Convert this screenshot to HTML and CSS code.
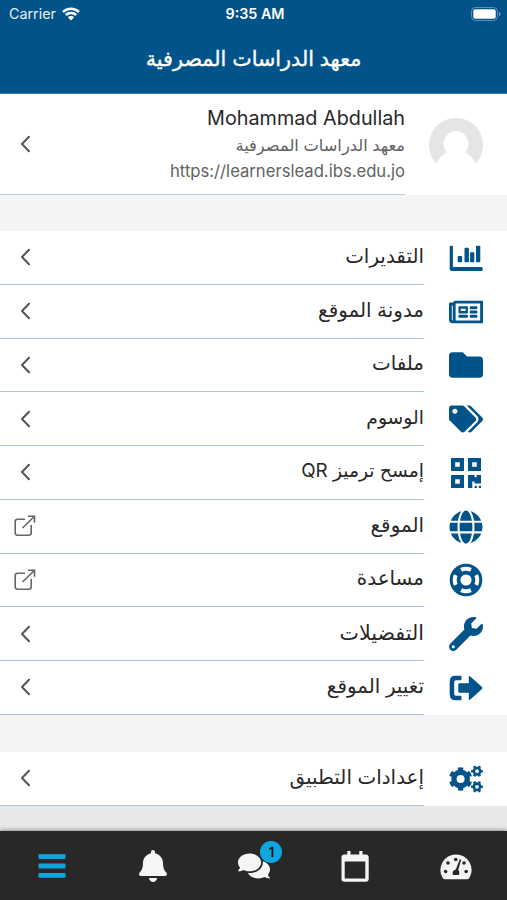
FILE: index.html
```
<!DOCTYPE html>
<html lang="ar" dir="rtl">
<head>
  <meta charset="UTF-8">
  <title>معهد الدراسات المصرفية</title>
  <link rel="stylesheet" href="styles.css">
</head>
<body>

<header class="header">
  <div class="status" dir="ltr">
    <div class="carrier">
      <span>Carrier</span>
      <svg class="wifi" viewBox="0 0 18 14">
        <path d="M1 5a11.5 11.5 0 0 1 16 0M3.8 8a7.5 7.5 0 0 1 10.4 0" fill="none" stroke="#fff" stroke-width="2.5"/>
        <path d="M5.8 10.2a4.6 4.6 0 0 1 6.4 0L9 13.6z" fill="#fff"/>
      </svg>
    </div>
    <span class="time">9:35 AM</span>
    <svg class="battery" viewBox="0 0 30 14">
      <rect x=".5" y=".5" width="26" height="13" rx="4" fill="none" stroke="#5f8fb4"/>
      <rect x="2.3" y="2.3" width="22.4" height="9.4" rx="2" fill="#fff"/>
      <path d="M28 5c2 .8 2 3.2 0 4z" fill="#7fa5c2"/>
    </svg>
  </div>
  <h1>معهد الدراسات المصرفية</h1>
</header>

<main class="content">
  <section class="profile">
    <svg class="avatar" viewBox="0 0 54 54">
      <path d="M27 0a27 27 0 0 1 19.5 45.700c-2-5.200-5.500-9-10.500-11.500a12.500 12.500 0 1 0-18 0c-5 2.500-8.500 6.300-10.500 11.500A27 27 0 0 1 27 0z" fill="#e5e5e5"/>
    </svg>
    <div class="profile-text">
      <h2 dir="ltr">Mohammad Abdullah</h2>
      <p class="site">معهد الدراسات المصرفية</p>
      <p class="url" dir="ltr">https://learnerslead.ibs.edu.jo</p>
      <svg class="chevron" viewBox="0 0 10 18"><path d="M9 1.800L2 9 9 16.200"/></svg>
    </div>
  </section>

  <ul class="menu">
    <li>
      <svg class="icon" viewBox="0 0 34 34">
        <path d="M1.700 4.700h1.200q1 0 1 1v20.400h28.500q1.200 0 1.200 1v1.900q0 1-1 1H2.700q-2 0-2-2V5.700q0-1 1-1zM9.500 15h2.800q.8 0 .8.800v4.700q0 .8-.8.800H9.500q-.8 0-.8-.8v-4.700q0-.8.8-.8zM16.300 6.800h2.800q.8 0 .8.800v12.900q0 .8-.8.800h-2.800q-.8 0-.8-.8V7.600q0-.8.800-.8zM21.900 11.300h2.600q.8 0 .8.800v8.400q0 .8-.8.800h-2.600q-.8 0-.8-.8v-8.400q0-.8.800-.8zM27.800 4.700h2.700q.8 0 .8.800v15q0 .8-.8.800h-2.700q-.8 0-.8-.8v-15q0-.8.800-.8z"/>
      </svg>
      <div class="row"><span>التقديرات</span><svg class="chevron" viewBox="0 0 10 18"><path d="M9 1.800L2 9 9 16.200"/></svg></div>
    </li>
    <li>
      <svg class="icon" viewBox="0 0 576 512">
        <path d="M552 64H112c-20.858 0-38.643 13.377-45.248 32H24c-13.255 0-24 10.745-24 24v272c0 30.928 25.072 56 56 56h496c13.255 0 24-10.745 24-24V88c0-13.255-10.745-24-24-24zM48 392V144h16v248c0 4.411-3.589 8-8 8s-8-3.589-8-8zm480 8H111.422c.374-2.614.578-5.283.578-8V112h416v288zM172 280h136c6.627 0 12-5.373 12-12v-96c0-6.627-5.373-12-12-12H172c-6.627 0-12 5.373-12 12v96c0 6.627 5.373 12 12 12zm28-80h80v40h-80v-40zm-40 140v-24c0-6.627 5.373-12 12-12h136c6.627 0 12 5.373 12 12v24c0 6.627-5.373 12-12 12H172c-6.627 0-12-5.373-12-12zm192 0v-24c0-6.627 5.373-12 12-12h104c6.627 0 12 5.373 12 12v24c0 6.627-5.373 12-12 12H364c-6.627 0-12-5.373-12-12zm0-144v-24c0-6.627 5.373-12 12-12h104c6.627 0 12 5.373 12 12v24c0 6.627-5.373 12-12 12H364c-6.627 0-12-5.373-12-12zm0 72v-24c0-6.627 5.373-12 12-12h104c6.627 0 12 5.373 12 12v24c0 6.627-5.373 12-12 12H364c-6.627 0-12-5.373-12-12z"/>
      </svg>
      <div class="row"><span>مدونة الموقع</span><svg class="chevron" viewBox="0 0 10 18"><path d="M9 1.800L2 9 9 16.200"/></svg></div>
    </li>
    <li>
      <svg class="icon" viewBox="0 0 512 512">
        <path d="M464 128H272l-64-64H48C21.490 64 0 85.490 0 112v288c0 26.510 21.490 48 48 48h416c26.510 0 48-21.490 48-48V176c0-26.510-21.490-48-48-48z"/>
      </svg>
      <div class="row"><span>ملفات</span><svg class="chevron" viewBox="0 0 10 18"><path d="M9 1.800L2 9 9 16.200"/></svg></div>
    </li>
    <li>
      <svg class="icon" viewBox="0 0 640 512">
        <path d="M497.941 225.941L286.059 14.059A48 48 0 0 0 252.118 0H48C21.490 0 0 21.490 0 48v204.118a48 48 0 0 0 14.059 33.941l211.882 211.882c18.744 18.745 49.136 18.746 67.882 0l204.118-204.118c18.745-18.745 18.745-49.137 0-67.882zM112 160c-26.510 0-48-21.490-48-48s21.490-48 48-48 48 21.490 48 48-21.490 48-48 48zm513.941 133.823L421.823 497.941c-18.745 18.745-49.137 18.745-67.882 0l-.36-.36L527.640 323.522c16.999-16.999 26.360-39.600 26.360-63.640s-9.362-46.641-26.360-63.640L331.397 0h48.721a48 48 0 0 1 33.941 14.059l211.882 211.882c18.745 18.745 18.745 49.137 0 67.882z"/>
      </svg>
      <div class="row"><span class="narrow">الوسوم</span><svg class="chevron" viewBox="0 0 10 18"><path d="M9 1.800L2 9 9 16.200"/></svg></div>
    </li>
    <li>
      <svg class="icon" viewBox="0 0 34 34">
        <path fill-rule="evenodd" d="M2 2h13v13H2zM6.200 6.200v4.600h4.600V6.200zM19 2h13v13H19zM23.200 6.200v4.600h4.600V6.200zM2 19h13v13H2zM6.200 23.200v4.600h4.600v-4.600zM19 19h6.500v2.200h2.200V19H32v8.600h-6.500v-2.100h-2.200V32H19zM25.600 29.800h2.200V32h-2.200zM29.800 29.800H32V32h-2.200z"/>
      </svg>
      <div class="row"><span class="narrow">إمسح ترميز QR</span><svg class="chevron" viewBox="0 0 10 18"><path d="M9 1.800L2 9 9 16.200"/></svg></div>
    </li>
    <li>
      <svg class="icon" viewBox="0 0 496 512">
        <path d="M336.500 160C322 70.700 287.800 8 248 8s-74 62.700-88.500 152h177zM152 256c0 22.200 1.200 43.500 3.300 64h185.300c2.100-20.500 3.300-41.800 3.300-64s-1.200-43.500-3.300-64H155.300c-2.100 20.500-3.300 41.800-3.300 64zm324.700-96c-28.600-67.900-86.500-120.400-158-141.600 24.400 33.800 41.200 84.700 50 141.600h108zM177.200 18.400C105.800 39.600 47.800 92.100 19.300 160h108c8.700-56.900 25.500-107.800 49.900-141.600zM487.400 192H372.700c2.100 21 3.300 42.500 3.300 64s-1.200 43-3.300 64h114.600c5.500-20.500 8.600-41.800 8.600-64s-3.100-43.500-8.500-64zM120 256c0-21.500 1.200-43 3.300-64H8.600C3.200 212.500 0 233.800 0 256s3.200 43.500 8.600 64h114.600c-2-21-3.200-42.500-3.200-64zm39.500 96c14.500 89.300 48.700 152 88.500 152s74-62.700 88.500-152h-177zm159.300 141.600c71.400-21.200 129.400-73.700 158-141.600h-108c-8.800 56.900-25.600 107.800-50 141.600zM19.300 352c28.600 67.900 86.500 120.400 158 141.600-24.400-33.800-41.200-84.700-50-141.600h-108z"/>
      </svg>
      <div class="row"><span>الموقع</span><svg class="open" viewBox="0 0 22 22"><path d="M11 4.200H3.600A2.400 2.400 0 0 0 1.200 6.600v11.200a2.400 2.400 0 0 0 2.400 2.400h11.200a2.400 2.400 0 0 0 2.400-2.400V10M14 1.300h6.500v6.500M20.300 1.500L8.500 13"/></svg></div>
    </li>
    <li>
      <svg class="icon" viewBox="0 0 34 34">
        <circle cx="17" cy="17" r="16.300"/>
        <circle cx="17" cy="17" r="5.600" fill="#fff"/>
        <circle cx="17" cy="17" r="11.300" fill="none" stroke="#fff" stroke-width="4" pathLength="8" stroke-dasharray="1.150 .85" stroke-dashoffset=".575"/>
      </svg>
      <div class="row"><span>مساعدة</span><svg class="open" viewBox="0 0 22 22"><path d="M11 4.200H3.600A2.400 2.400 0 0 0 1.200 6.600v11.200a2.400 2.400 0 0 0 2.400 2.400h11.200a2.400 2.400 0 0 0 2.400-2.400V10M14 1.300h6.500v6.500M20.300 1.500L8.500 13"/></svg></div>
    </li>
    <li>
      <svg class="icon" viewBox="0 0 512 512">
        <path d="M507.730 109.100c-2.240-9.030-13.540-12.090-20.120-5.510l-74.360 74.360-67.880-11.310-11.310-67.880 74.360-74.360c6.620-6.620 3.430-17.900-5.660-20.160-47.380-11.740-99.550.91-136.580 37.930-39.640 39.640-50.550 97.100-34.050 147.200L18.740 402.760c-24.990 24.990-24.990 65.510 0 90.500 24.990 24.990 65.510 24.990 90.500 0l213.210-213.210c50.120 16.710 107.470 5.680 147.370-34.220 37.070-37.070 49.700-89.320 37.910-136.730zM64 472c-13.250 0-24-10.750-24-24 0-13.260 10.750-24 24-24s24 10.740 24 24c0 13.250-10.750 24-24 24z"/>
      </svg>
      <div class="row"><span class="wide">التفضيلات</span><svg class="chevron" viewBox="0 0 10 18"><path d="M9 1.800L2 9 9 16.200"/></svg></div>
    </li>
    <li>
      <svg class="icon" viewBox="0 0 34 34">
        <path d="M11.500 4.700h-5Q.7 4.700.7 10.500v13q0 5.800 5.800 5.800h5q1 0 1-1v-2.600q0-1-1-1H7q-1.800 0-1.800-1.800V11.100Q5.200 9.300 7 9.300h4.500q1 0 1-1V5.700q0-1-1-1zM10.300 12.300h9.500V6q0-1.500 1.200-.8l12 10.900q1 .9 0 1.800L21 28.800q-1.200.7-1.200-.8v-6.300h-9.500q-1 0-1-1v-7.400q0-1 1-1z"/>
      </svg>
      <div class="row"><span>تغيير الموقع</span><svg class="chevron" viewBox="0 0 10 18"><path d="M9 1.800L2 9 9 16.200"/></svg></div>
    </li>
  </ul>

  <ul class="menu">
    <li>
      <svg class="icon gears" viewBox="0 0 34 34">
        <g fill="none">
          <circle cx="11.600" cy="17" r="6.700" stroke-width="5.400"/>
          <circle cx="11.600" cy="17" r="10" stroke-width="3.400" pathLength="12" stroke-dasharray="1 1" stroke-dashoffset=".5" transform="rotate(-90 11.600 17)"/>
          <circle cx="28" cy="9.200" r="3.200" stroke-width="2.600"/>
          <circle cx="28" cy="9.200" r="5" stroke-width="1.800" pathLength="12" stroke-dasharray="1 1" stroke-dashoffset=".5"/>
          <circle cx="28" cy="24.800" r="3.200" stroke-width="2.600"/>
          <circle cx="28" cy="24.800" r="5" stroke-width="1.800" pathLength="12" stroke-dasharray="1 1" stroke-dashoffset=".5"/>
        </g>
      </svg>
      <div class="row"><span>إعدادات التطبيق</span><svg class="chevron" viewBox="0 0 10 18"><path d="M9 1.800L2 9 9 16.200"/></svg></div>
    </li>
  </ul>
</main>

<nav class="tabs">
  <a class="tab">
    <svg viewBox="0 0 32 32">
      <path d="M16 4.500A15.500 15.500 0 0 0 2.600 27.800q.8 1.500 2.400 1.500h22q1.600 0 2.400-1.500A15.500 15.500 0 0 0 16 4.500z"/>
      <g fill="#282828">
        <circle cx="15.700" cy="9.500" r="1.800"/><circle cx="8" cy="13" r="1.800"/><circle cx="5.600" cy="21.500" r="1.800"/><circle cx="24" cy="13" r="1.800"/><circle cx="26.200" cy="21.500" r="1.800"/>
        <path d="M19.800 9.300l1.400.5-3 10.300q2 1.800.6 4.800h-5.900q-1.400-4.300 2.900-5.500z"/>
      </g>
    </svg>
  </a>
  <a class="tab">
    <svg viewBox="0 0 32 32">
      <path fill-rule="evenodd" d="M8.300 1h3.200v3.500h8.800V1h3.200v3.500h3.200q3 0 3 3v21.300q0 3-3 3H5.500q-3 0-3-3V7.500q0-3 3-3h2.800zM5.700 11.500v17h20.600v-17z"/>
    </svg>
  </a>
  <a class="tab">
    <svg viewBox="0 0 576 512">
      <path d="M416 192c0-88.400-93.100-160-208-160S0 103.600 0 192c0 34.300 14.100 65.900 38 92-13.400 30.200-35.500 54.200-35.800 54.500-2.200 2.300-2.800 5.700-1.500 8.700S4.800 352 8 352c36.600 0 66.900-12.300 88.700-25 32.200 15.700 70.300 25 111.300 25 114.900 0 208-71.600 208-160zm122 220c23.900-26 38-57.700 38-92 0-66.900-53.500-124.200-129.300-148.100.9 6.600 1.300 13.300 1.300 20.100 0 105.900-107.700 192-240 192-10.800 0-21.300-.8-31.700-1.900C207.800 439.600 281.800 480 368 480c41 0 79.100-9.200 111.300-25 21.800 12.700 52.100 25 88.700 25 3.200 0 6.100-1.900 7.300-4.800 1.300-2.900.7-6.300-1.500-8.700-.3-.3-22.400-24.200-35.800-54.500z"/>
    </svg>
    <span class="badge">1</span>
  </a>
  <a class="tab">
    <svg viewBox="0 0 448 512">
      <path d="M224 512c35.320 0 63.970-28.650 63.970-64H160.030c0 35.350 28.650 64 63.970 64zm215.390-149.710c-19.320-20.760-55.470-51.990-55.470-154.290 0-77.700-54.480-139.900-127.940-155.160V32c0-17.670-14.320-32-31.980-32s-31.980 14.330-31.980 32v20.840C118.560 68.100 64.080 130.300 64.080 208c0 102.300-36.150 133.530-55.470 154.290-6 6.450-8.660 14.160-8.610 21.710.11 16.400 12.980 32 32.100 32h383.800c19.120 0 32-15.600 32.100-32 .05-7.550-2.610-15.270-8.610-21.710z"/>
    </svg>
  </a>
  <a class="tab active">
    <svg viewBox="0 0 32 32">
      <rect x="2.500" y="4.300" width="27" height="4.800" rx="1"/>
      <rect x="2.500" y="13.600" width="27" height="4.800" rx="1"/>
      <rect x="2.500" y="23" width="27" height="4.800" rx="1"/>
    </svg>
  </a>
</nav>

</body>
</html>
```
FILE: styles.css
```
* {
  box-sizing: border-box;
}
body {
  margin: 0;
  height: 900px;
  overflow: hidden;
  display: flex;
  flex-direction: column;
  background-color: #e8e8e8;
  color: #282828;
  font-family: Inter, "DejaVu Sans", sans-serif;
}
h1, h2, p, ul {
  margin: 0;
  padding: 0;
  font-weight: normal;
}
svg {
  display: block;
  flex: none;
}

.header {
  height: 94px;
  background-color: #02538a;
  color: #fff;
  border-bottom: 1px solid #3a7aaa;
}
.status {
  height: 27px;
  padding: 0 6px 0 9px;
  display: grid;
  grid-template-columns: 1fr auto 1fr;
  align-items: center;
  font-size: 14.300px;
}
.carrier {
  display: flex;
  align-items: center;
  gap: 6px;
  color: #e6eef4;
}
.wifi {
  width: 18px;
  height: 14px;
}
.time {
  font-weight: 600;
}
.battery {
  width: 30px;
  height: 14px;
  justify-self: end;
}
.header h1 {
  height: 66px;
  line-height: 64px;
  font-size: 20.700px;
  text-align: center;
  -webkit-text-stroke: .4px #fff;
}

.profile {
  height: 101px;
  padding-right: 24px;
  display: flex;
  align-items: center;
  gap: 24px;
  background-color: #fff;
}
.avatar {
  width: 54px;
  height: 54px;
}
.profile-text {
  flex: 1;
  height: 101px;
  padding-top: 10px;
  border-bottom: 1px solid #b9cbdb;
  position: relative;
  text-align: right;
}
.profile h2 {
  font-size: 19.800px;
  line-height: 28px;
  text-align: right;
}
.profile p {
  font-size: 16.300px;
  line-height: 26px;
  color: #626262;
  text-align: right;
}
.profile .url {
  font-size: 16.650px;
}
.profile .chevron {
  position: absolute;
  left: 20px;
  top: 41px;
}

.menu {
  margin-top: 36px;
  list-style: none;
  background-color: #fff;
}
.menu + .menu {
  margin-top: 37px;
}
.menu li {
  height: 53.750px;
  padding-right: 24px;
  display: flex;
  align-items: center;
  gap: 25px;
}
.icon {
  width: 34px;
  height: 34px;
  fill: #02538a;
}
.gears {
  stroke: #02538a;
}
.row {
  flex: 1;
  height: 100%;
  padding-left: 20px;
  display: flex;
  align-items: center;
  justify-content: space-between;
  border-bottom: 1px solid #a9c4dc;
  font-size: 19.900px;
}
.row span {
  padding-bottom: 3px;
}
.row .narrow {
  font-size: 18.800px;
}
.row .wide {
  font-size: 20.600px;
}
.chevron {
  width: 10px;
  height: 18px;
  fill: none;
  stroke: #565656;
  stroke-width: 2;
  stroke-linecap: round;
  stroke-linejoin: round;
}
.open {
  width: 22px;
  height: 22px;
  margin-left: -6px;
  fill: none;
  stroke: #666;
  stroke-width: 1.600;
}
.content {
  flex: 1;
  background: linear-gradient(#f4f4f4 700px, #e8e8e8 700px);
}

.tabs {
  height: 69px;
  padding-left: 1px;
  display: flex;
  background-color: #282828;
  box-shadow: 0 -1px 4px rgba(0, 0, 0, .4);
}
.tab {
  flex: 1;
  display: flex;
  align-items: center;
  justify-content: center;
  position: relative;
  fill: #f5f5f5;
}
.tab svg {
  width: 32px;
  height: 32px;
}
.active {
  fill: #10a5df;
}
.badge {
  position: absolute;
  left: 57px;
  top: 10px;
  width: 22px;
  height: 22px;
  border-radius: 50%;
  background-color: #10a5df;
  color: #111;
  font-size: 13px;
  font-weight: 600;
  line-height: 22px;
  text-align: center;
}
```
